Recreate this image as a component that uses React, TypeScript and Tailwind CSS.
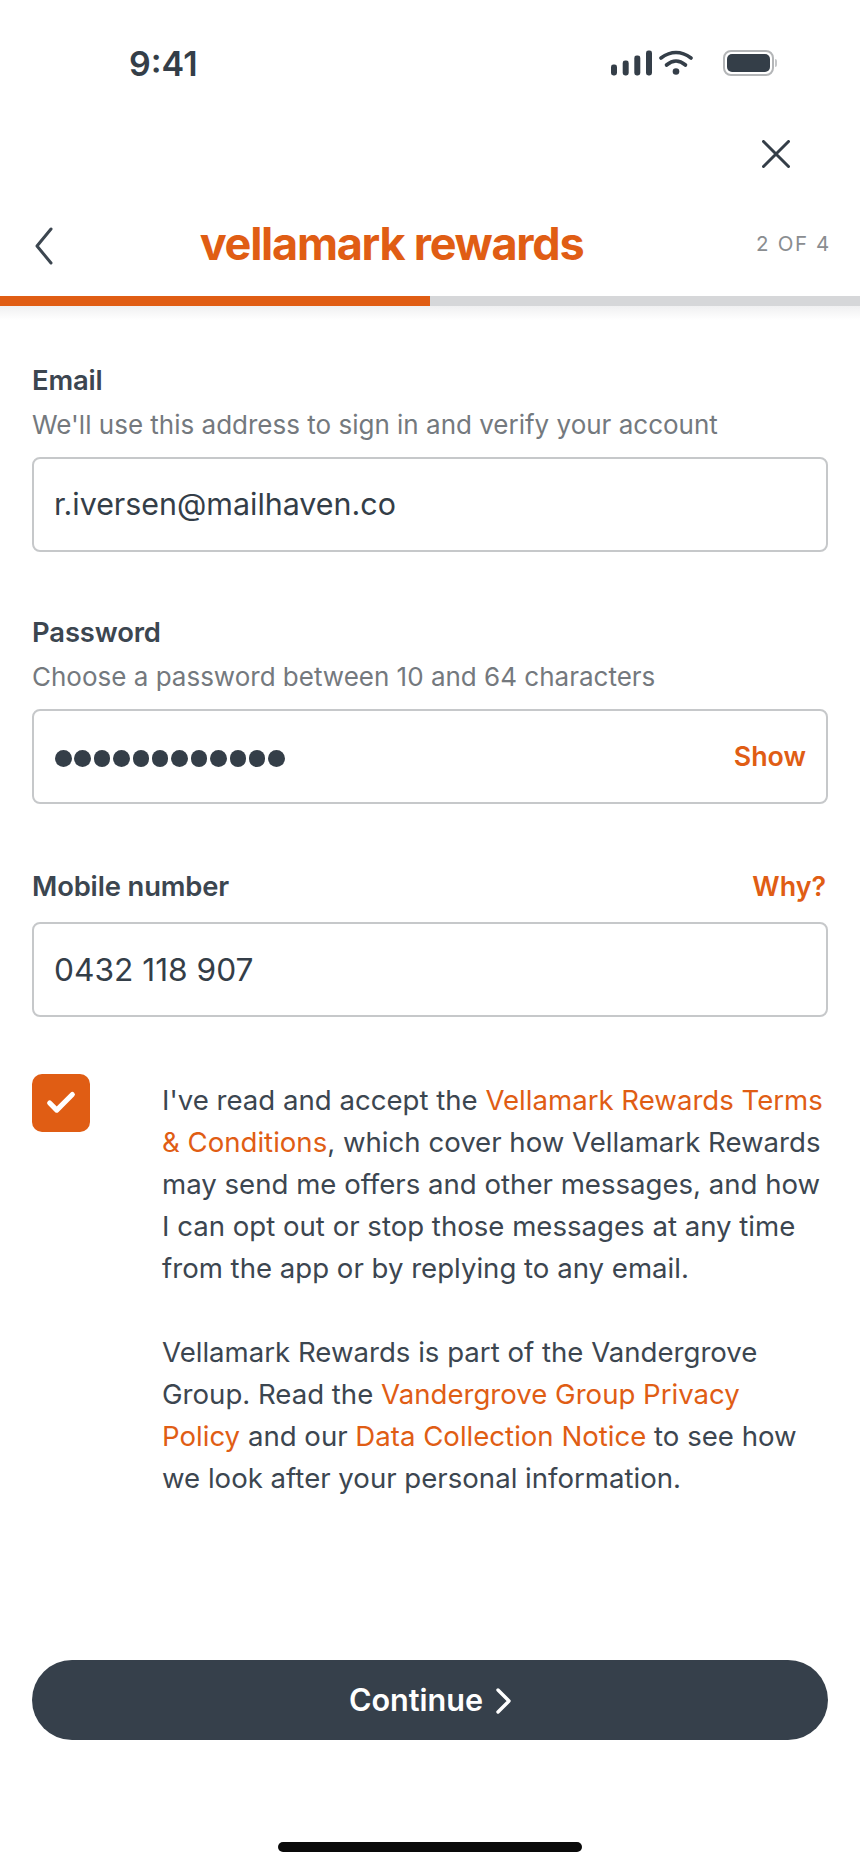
import { Check } from "lucide-react";
import type { ReactNode } from "react";

const FONT = "font-['Inter','Noto_Sans',sans-serif]";

function StatusIcons() {
  return (
    <div className="flex items-center text-[#343e48]">
      <svg width="41" height="26" viewBox="0 0 41 26" fill="currentColor">
        <rect x="0" y="14.5" width="6" height="11" rx="2.4" />
        <rect x="11.7" y="10.5" width="6" height="15" rx="2.4" />
        <rect x="23.3" y="5.5" width="6" height="20" rx="2.4" />
        <rect x="35" y="0.5" width="6" height="25" rx="2.4" />
      </svg>
      <svg width="34" height="26" viewBox="0 0 34 26" className="ml-[7px]" fill="none">
        <path d="M2 8 Q17 -3 32 8" stroke="currentColor" strokeWidth="3.6" strokeLinecap="round" />
        <path d="M7.5 15 Q17 7 26.5 15" stroke="currentColor" strokeWidth="3.6" strokeLinecap="round" />
        <circle cx="17" cy="21.5" r="3.3" fill="currentColor" />
      </svg>
      <div className="ml-[30px] flex items-center">
        <div className="h-[26px] w-[51px] rounded-[8px] border-2 border-[#b4b6b8] p-[2px]">
          <div className="h-full w-full rounded-[5px] bg-[#343e48]" />
        </div>
        <div className="ml-[1px] h-[8px] w-[2px] rounded-r-full bg-[#c4c6c8]" />
      </div>
    </div>
  );
}

function Field({
  label,
  helper,
  aside,
  children,
}: {
  label: string;
  helper?: string;
  aside?: ReactNode;
  children: ReactNode;
}) {
  return (
    <div>
      <div className="flex h-[32px] items-center justify-between pt-[1px]">
        <span className="text-[27.4px] font-semibold tracking-[-0.005em] text-[#3c4650]">{label}</span>
        {aside}
      </div>
      {helper ? <p className="mt-[13px] h-[32px] text-[26px] leading-[32px] text-[#74797e]">{helper}</p> : null}
      <div
        className={`${helper ? "mt-[16px]" : "mt-[20px]"} flex h-[95px] items-center rounded-[8px] border-2 border-[#c6c8ca] pl-[20px] pr-[20px] text-[#343e48]`}
      >
        {children}
      </div>
    </div>
  );
}

const Link = ({ children }: { children: ReactNode }) => <span className="text-[#e05d14]">{children}</span>;

export default function App() {
  return (
    <div className={`${FONT} flex h-[1864px] w-[860px] flex-col overflow-hidden bg-white`}>
      <div className="flex h-[126px] shrink-0 items-center justify-between pl-[129px] pr-[83px]">
        <span className="text-[34px] font-semibold text-[#343e48]">9:41</span>
        <StatusIcons />
      </div>

      <div className="flex h-[60px] shrink-0 justify-end pr-[70px] pt-[14px]">
        <svg width="28" height="28" viewBox="0 0 28 28" fill="none" stroke="#343e48" strokeWidth="3" strokeLinecap="round">
          <path d="M1.5 1.5 L26.5 26.5 M26.5 1.5 L1.5 26.5" />
        </svg>
      </div>

      <div className="flex h-[110px] shrink-0 items-center justify-between pl-[35px] pr-[29px] pt-[6px]">
        <svg width="18" height="38" viewBox="0 0 18 38" fill="none" stroke="#3c4650" strokeWidth="3" strokeLinecap="round" strokeLinejoin="round" className="mt-[4px]">
          <path d="M16 2 L2 19 L16 36" />
        </svg>
        <span className="ml-[-26px] text-[45px] font-bold tracking-[-1.25px] text-[#e05d14]">vellamark rewards</span>
        <span className="text-[20.5px] tracking-[0.08em] text-[#8a8d90]">2 OF 4</span>
      </div>

      {/* step progress, 2 of 4 */}
      <div className="flex h-[10px] shrink-0 bg-[#d6d7d9]">
        <div className="h-full w-1/2 bg-[#e05d14]" />
      </div>
      <div className="h-[14px] shrink-0 bg-gradient-to-b from-[#f0f0f1] to-white" />

      <div className="flex flex-1 flex-col px-[32px] pt-[44px]">
        <Field label="Email" helper="We'll use this address to sign in and verify your account">
          <span className="text-[30.4px]">r.iversen@mailhaven.co</span>
        </Field>

        <div className="mt-[64px]">
          <Field label="Password" helper="Choose a password between 10 and 64 characters">
            <span className="ml-[1px] mt-[4px] flex gap-[2.9px]">
              {Array.from({ length: 12 }, (_, i) => (
                <span key={i} className="h-[16.5px] w-[16.5px] rounded-full bg-[#343e48]" />
              ))}
            </span>
            <span className="ml-auto text-[26.8px] font-semibold text-[#e05d14]">Show</span>
          </Field>
        </div>

        <div className="mt-[66px]">
          <Field
            label="Mobile number"
            aside={<span className="mr-[2px] text-[26.8px] font-semibold text-[#e05d14]">Why?</span>}
          >
            <span className="text-[31.7px]">0432 118 907</span>
          </Field>
        </div>

        <div className="mt-[57px] flex">
          <div className="flex h-[58px] w-[58px] shrink-0 items-center justify-center rounded-[10px] bg-[#e05d14]">
            <Check size={34} strokeWidth={3.6} className="text-white" />
          </div>
          <div className="ml-[72px] mr-[4px] mt-[5px] text-[27.6px] leading-[42px] text-[#3c4650]">
            <p>
              I've read and accept the <Link>Vellamark Rewards Terms &amp; Conditions</Link>, which cover how Vellamark
              Rewards may send me offers and other messages, and how I can opt out or stop those messages at any time
              from the app or by replying to any email.
            </p>
            <p className="mt-[42px]">
              Vellamark Rewards is part of the Vandergrove Group. Read the <Link>Vandergrove Group Privacy Policy</Link>{" "}
              and our <Link>Data Collection Notice</Link> to see how we look after your personal information.
            </p>
          </div>
        </div>

        <button className="mt-auto flex h-[80px] w-full shrink-0 items-center justify-center gap-[13px] rounded-full bg-[#36404b] text-[30.6px] font-semibold text-white">
          Continue
          <svg width="15" height="26" viewBox="0 0 15 26" fill="none" stroke="#ffffff" strokeWidth="3.4" strokeLinecap="round" strokeLinejoin="round" className="mt-[2px]">
            <path d="M2 2 L13 13 L2 24" />
          </svg>
        </button>

        <div className="flex h-[124px] shrink-0 items-end justify-center pb-[12px]">
          <div className="h-[10px] w-[304px] rounded-full bg-[#0a0a0a]" />
        </div>
      </div>
    </div>
  );
}
